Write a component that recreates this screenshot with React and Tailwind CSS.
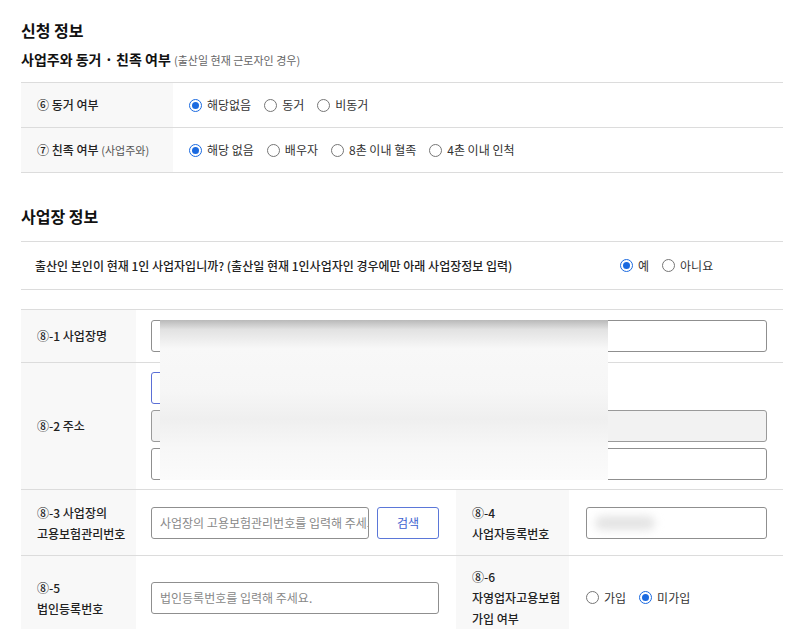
import React from "react";

const Radio = ({ checked, label }) => {
  return (
    <label className="flex items-center gap-[5px] mr-[13px]">
      <span
        className={
          "w-[13px] h-[13px] rounded-full border flex items-center justify-center bg-white " +
          (checked ? "border-[#1b6ae0]" : "border-[#767676]")
        }
      >
        {checked && <span className="w-[7px] h-[7px] rounded-full bg-[#1b6ae0]" />}
      </span>
      <span className="text-[12px] text-[#333]">{label}</span>
    </label>
  );
};

const Input = ({ className = "", placeholder, disabled, focused, children }) => {
  let tone = "bg-white border-[#8f8f8f] ";
  if (disabled) tone = "bg-[#f2f2f2] border-[#9a9a9a] ";
  if (focused) tone = "bg-white border-[#5b6fd6] ";
  return (
    <div
      className={
        "relative h-[32px] rounded-[3px] border flex items-center px-2 overflow-hidden " +
        tone +
        className
      }
    >
      {placeholder && (
        <span className="text-[12px] text-[#888] whitespace-nowrap">{placeholder}</span>
      )}
      {children}
    </div>
  );
};

const App = () => {
  return (
    <div className="relative w-[800px] h-[629px] overflow-hidden bg-white text-[#222] [font-family:'Noto_Sans_CJK_KR','Noto_Sans',sans-serif] pl-[21px] pr-[17px] pt-[18px]">
      {/* 신청 정보 */}
      <h2 className="text-[16px] leading-[24px] font-bold text-[#111]">신청 정보</h2>
      <h3 className="mt-[7px] text-[14px] leading-[20px] font-bold text-[#111]">
        사업주와 동거 · 친족 여부{" "}
        <span className="text-[11px] font-normal text-[#666]">(출산일 현재 근로자인 경우)</span>
      </h3>

      <div className="mt-[12px] border-t border-[#dcdcdc]">
        <div className="flex h-[45px] border-b border-[#dcdcdc]">
          <div className="w-[152px] bg-[#f8f8f8] flex items-center pl-4 text-[12px] font-medium">
            ⑥ 동거 여부
          </div>
          <div className="flex items-center pl-4">
            <Radio checked label="해당없음" />
            <Radio label="동거" />
            <Radio label="비동거" />
          </div>
        </div>
        <div className="flex h-[45px] border-b border-[#dcdcdc]">
          <div className="w-[152px] bg-[#f8f8f8] flex items-center pl-4 text-[12px] font-medium">
            ⑦ 친족 여부&nbsp;<span className="text-[11px] font-normal text-[#555]">(사업주와)</span>
          </div>
          <div className="flex items-center pl-4">
            <Radio checked label="해당 없음" />
            <Radio label="배우자" />
            <Radio label="8촌 이내 혈족" />
            <Radio label="4촌 이내 인척" />
          </div>
        </div>
      </div>

      {/* 사업장 정보 */}
      <h2 className="mt-[31px] text-[16px] leading-[24px] font-bold text-[#111]">사업장 정보</h2>

      <div className="mt-[13px] flex items-center justify-between h-[49px] border-y border-[#dcdcdc] pl-[14px]">
        <p className="text-[12px] font-medium">
          출산인 본인이 현재 1인 사업자입니까? (출산일 현재 1인사업자인 경우에만 아래 사업장정보 입력)
        </p>
        <div className="flex items-center w-[163px]">
          <Radio checked label="예" />
          <Radio label="아니요" />
        </div>
      </div>

      <div className="mt-[19px] border-t border-[#dcdcdc]">
        <div className="flex h-[53px] border-b border-[#dcdcdc]">
          <div className="w-[115px] bg-[#f8f8f8] flex items-center pl-4 text-[12px] font-medium">
            ⑧-1 사업장명
          </div>
          <div className="flex-1 flex items-center pl-[15px] pr-4">
            <Input className="w-full" />
          </div>
        </div>

        <div className="flex h-[127px] border-b border-[#dcdcdc]">
          <div className="w-[115px] bg-[#f8f8f8] flex items-center pl-4 text-[12px] font-medium">
            ⑧-2 주소
          </div>
          <div className="flex-1 flex flex-col justify-center gap-[6px] pl-[15px] pr-4">
            <Input className="w-[120px]" focused />
            <Input className="w-full" disabled />
            <Input className="w-full" />
          </div>
        </div>

        <div className="flex h-[66px] border-b border-[#dcdcdc]">
          <div className="w-[115px] bg-[#f8f8f8] flex flex-col justify-center pl-4 text-[12px] leading-[21px] font-medium">
            <span>⑧-3 사업장의</span>
            <span>고용보험관리번호</span>
          </div>
          <div className="w-[320px] flex items-center gap-2 pl-[15px] pr-[17px]">
            <Input className="w-[218px]" placeholder="사업장의 고용보험관리번호를 입력해 주세요." />
            <button className="h-[32px] w-[62px] rounded-[3px] border border-[#5b77d8] bg-white text-[12px] text-[#3d5fd0]">
              검색
            </button>
          </div>
          <div className="w-[113px] bg-[#f8f8f8] flex flex-col justify-center pl-4 text-[12px] leading-[21px] font-medium">
            <span>⑧-4</span>
            <span>사업자등록번호</span>
          </div>
          <div className="flex-1 flex items-center pl-[17px] pr-4">
            <Input className="w-full">
              <span className="w-[60px] h-[14px] rounded-full bg-[#e4e4e4] blur-[4px]" />
            </Input>
          </div>
        </div>

        <div className="flex h-[84px] border-b border-[#dcdcdc]">
          <div className="w-[115px] bg-[#f8f8f8] flex flex-col justify-center pl-4 text-[12px] leading-[21px] font-medium">
            <span>⑧-5</span>
            <span>법인등록번호</span>
          </div>
          <div className="w-[320px] flex items-center pl-[15px] pr-[17px]">
            <Input className="w-full" placeholder="법인등록번호를 입력해 주세요." />
          </div>
          <div className="w-[113px] bg-[#f8f8f8] flex flex-col justify-center pl-4 text-[12px] leading-[21px] font-medium">
            <span>⑧-6</span>
            <span>자영업자고용보험</span>
            <span>가입 여부</span>
          </div>
          <div className="flex-1 flex items-center pl-[17px]">
            <Radio label="가입" />
            <Radio checked label="미가입" />
          </div>
        </div>
      </div>

      {/* blurred overlay */}
      <div className="absolute left-[160px] top-[320px] w-[448px] h-[160px] bg-[linear-gradient(to_bottom,#b9b9b9_0%,#e2e2e2_6%,#f8f8f8_18%,#f6f6f6_45%,#efefef_62%,#f7f7f7_80%,#fbfbfb_100%)]" />
    </div>
  );
};

export default App;
